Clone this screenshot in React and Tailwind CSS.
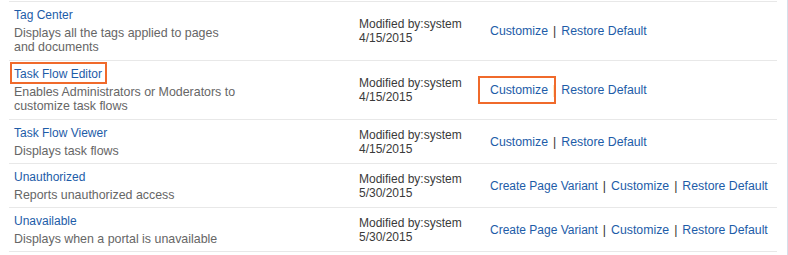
import React from 'react';

const rows = [
  { title: 'Tag Center', desc: 'Displays all the tags applied to pages and documents', date: '4/15/2015', actions: ['Customize', 'Restore Default'], tall: true },
  { title: 'Task Flow Editor', desc: 'Enables Administrators or Moderators to customize task flows', date: '4/15/2015', actions: ['Customize', 'Restore Default'], highlight: true, tall: true },
  { title: 'Task Flow Viewer', desc: 'Displays task flows', date: '4/15/2015', actions: ['Customize', 'Restore Default'] },
  { title: 'Unauthorized', desc: 'Reports unauthorized access', date: '5/30/2015', actions: ['Create Page Variant', 'Customize', 'Restore Default'] },
  { title: 'Unavailable', desc: 'Displays when a portal is unavailable', date: '5/30/2015', actions: ['Create Page Variant', 'Customize', 'Restore Default'] },
];

const Box = ({ className }) => (
  <span className={`absolute border-2 border-[#f06a2b] pointer-events-none ${className}`} />
);

const App = () => {
  return (
    <div
      className="w-[788px] h-[255px] bg-white border-r border-[#d6dfea] pl-[9px] pr-[10px] pt-px"
      style={{ fontFamily: '"Liberation Sans", Arial, sans-serif' }}
    >
      <div className="border-t border-[#e8e8e8]">
        {rows.map((row, i) => (
          <div key={i} className="grid grid-cols-[350px_131px_1fr] items-center border-b border-[#e8e8e8]">
            <div className={`pl-[5px] pt-[6px] ${row.tall ? 'pb-[6px]' : 'pb-[5px]'}`}>
              <div className="mb-[4px] text-[12px] leading-[14px]">
                <a className="relative inline-block align-top text-[#1d5ca8] cursor-pointer">
                  {row.title}
                  {row.highlight && <Box className="-left-[4px] -right-[5px] -top-[5px] -bottom-[3px]" />}
                </a>
              </div>
              <p className="max-w-[224px] text-[12.4px] leading-[14px] text-[#666]">{row.desc}</p>
            </div>
            <div className="text-[12px] leading-[14px] text-[#3a3a3a]">
              <div>Modified by:system</div>
              <div>{row.date}</div>
            </div>
            <div className="flex items-center text-[12.3px] leading-[14px] text-[#1d5ca8] whitespace-nowrap">
              {row.actions.map((a, j) => (
                <React.Fragment key={a}>
                  {j > 0 && <span className="mx-[5px] text-[#333]">|</span>}
                  <a className={`relative inline-block cursor-pointer ${a === 'Create Page Variant' ? 'text-[12px]' : ''}`}>
                    {a}
                    {row.highlight && a === 'Customize' && (
                      <Box className="-left-[12px] -right-[8px] -top-[7px] -bottom-[7px]" />
                    )}
                  </a>
                </React.Fragment>
              ))}
            </div>
          </div>
        ))}
      </div>
    </div>
  );
};

export default App;
